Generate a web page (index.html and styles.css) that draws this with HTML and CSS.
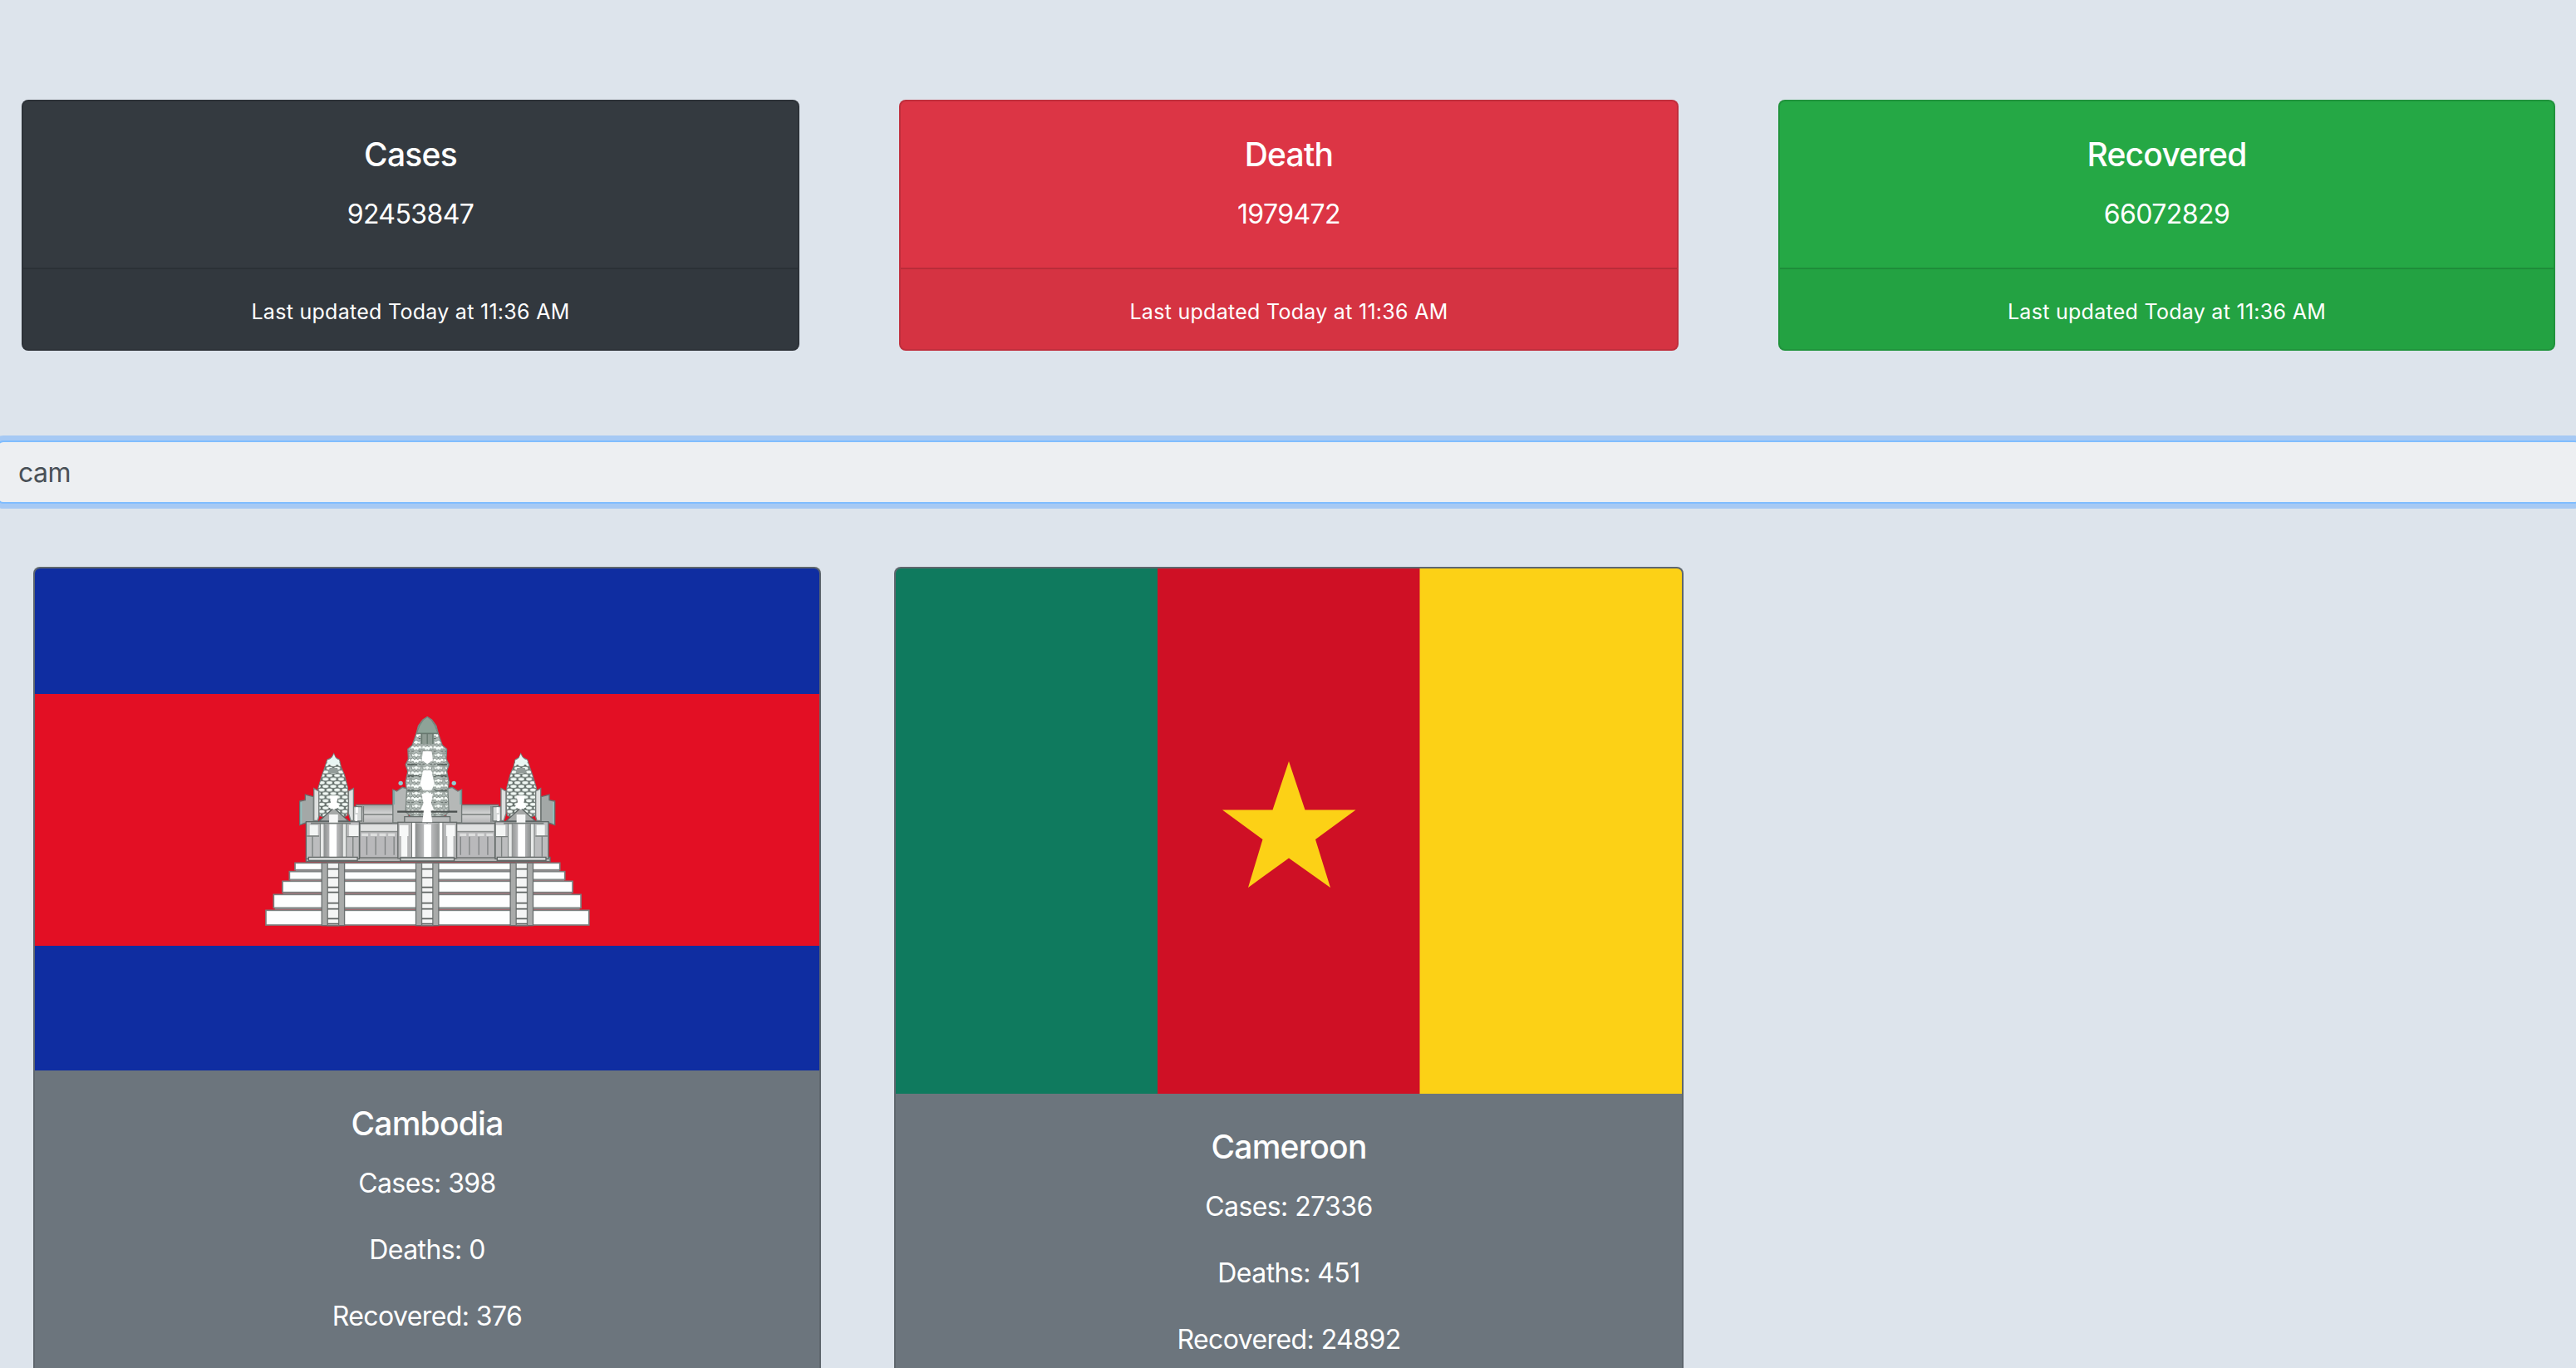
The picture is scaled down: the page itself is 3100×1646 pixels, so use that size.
FILE: index.html
```
<!DOCTYPE html>
<html lang="en">
<head>
<meta charset="utf-8">
<title>Covid tracker</title>
<link rel="stylesheet" href="styles.css">
</head>
<body>
<main class="page">
  <section class="summary">
    <article class="card card-dark">
      <div class="card-body"><h2 class="card-title">Cases</h2><p class="card-text">92453847</p></div>
      <footer class="card-footer"><small>Last updated Today at 11:36 AM</small></footer>
    </article>
    <article class="card card-danger">
      <div class="card-body"><h2 class="card-title">Death</h2><p class="card-text">1979472</p></div>
      <footer class="card-footer"><small>Last updated Today at 11:36 AM</small></footer>
    </article>
    <article class="card card-success">
      <div class="card-body"><h2 class="card-title">Recovered</h2><p class="card-text">66072829</p></div>
      <footer class="card-footer"><small>Last updated Today at 11:36 AM</small></footer>
    </article>
  </section>

  <input class="search" type="text" value="cam" aria-label="Search a country">

  <section class="countries">
    <article class="card card-country">
      <svg class="flag flag-kh" viewBox="0 0 943 604" preserveAspectRatio="none" role="img" aria-label="Flag of Cambodia">
        <defs>
          <pattern id="stones" x="289" y="0" width="28" height="26" patternUnits="userSpaceOnUse">
            <rect width="28" height="26" fill="#66706c"/>
            <g fill="#f1f8f4">
              <ellipse cx="14" cy="6.5" rx="11" ry="5.5"/>
              <ellipse cx="0" cy="19.5" rx="11" ry="5.5"/>
              <ellipse cx="28" cy="19.5" rx="11" ry="5.5"/>
            </g>
          </pattern>
          <pattern id="carving" x="622" y="12" width="40" height="46" patternUnits="userSpaceOnUse">
            <rect width="40" height="46" fill="#b4bdb9"/>
            <path d="M2 2l9 5 9-6 9 6 9-5-4 15-9-4-5 8-5-8-9 4zM0 24l8-4 6 6 6-5 6 5 6-6 8 4v12l-9-4-5 9-6-6-6 6-5-9-9 4z" fill="#f8fdfa" stroke="#5a635f" stroke-width="2"/>
            <path d="M2 42h9M29 42h9" stroke="#58605d" stroke-width="3"/>
          </pattern>
          <linearGradient id="roof" x2="0" y2="1"><stop offset="0" stop-color="#a3a6a6"/><stop offset=".5" stop-color="#d5d6d6"/><stop offset="1" stop-color="#b5b5b6"/></linearGradient>
          <linearGradient id="wall"><stop offset="0" stop-color="#8e9191"/><stop offset=".5" stop-color="#cfcfd1"/><stop offset="1" stop-color="#969898"/></linearGradient>
          <g id="stairs">
            <rect x="-41" y="595" width="82" height="226" fill="#a9abaa" stroke="#6b7070" stroke-width="4"/>
            <rect x="-20" y="595" width="40" height="226" fill="#f4f5f5" stroke="#737877" stroke-width="4"/>
            <path d="M-20 617h40M-20 648h40M-20 683h40M-20 701h40M-20 740h40M-20 761h40M-20 796h40M-20 815h40" stroke="#5d6261" stroke-width="5"/>
          </g>
          <g id="wing">
            <!-- gallery -->
            <rect x="385" y="385" width="150" height="66" fill="url(#roof)" stroke="#707675" stroke-width="4"/>
            <path d="M410 420h120M412 390v58" stroke="#777c7b" stroke-width="4"/>
            <rect x="398" y="452" width="140" height="124" fill="#b9b9bb" stroke="#666b6a" stroke-width="4"/>
            <rect x="402" y="457" width="132" height="22" fill="#e0e1e1"/>
            <path d="M402 482h132" stroke="#8a8e8d" stroke-width="4"/>
            <path d="M405 488h24v10h-24zM437 488h24v10h-24zM469 488h24v10h-24zM501 488h24v10h-24z" fill="#dedfdf"/>
            <path d="M424 500v66M456 500v66M490 500v66M522 500v66" stroke="#7f8283" stroke-width="4"/>
            <!-- outer pavilion -->
            <path d="M182 372l20-4v-20l30 8v94h-28l-22 8z" fill="#a3a8a7" stroke="#66706e" stroke-width="4"/>
            <path d="M187 376v78" stroke="#8fc0bd" stroke-width="5"/>
            <rect x="205" y="446" width="192" height="134" fill="#bcbdbe" stroke="#5f6665" stroke-width="4"/>
            <rect x="218" y="458" width="30" height="38" fill="#f3f5f4"/>
            <rect x="360" y="458" width="34" height="40" fill="#f3f5f4"/>
            <path d="M208 498h44M352 500h42M228 500v72M374 502v70" stroke="#7b807f" stroke-width="4"/>
            <rect x="256" y="452" width="14" height="122" fill="#e7e9e8" stroke="#777c7b" stroke-width="3"/>
            <rect x="336" y="452" width="14" height="122" fill="#e7e9e8" stroke="#777c7b" stroke-width="3"/>
            <rect x="270" y="456" width="66" height="118" fill="url(#wall)"/>
            <rect x="289" y="430" width="26" height="144" fill="#fff"/>
            <path d="M376 392h30v52h-30z" fill="#d5d8d7" stroke="#6f7574" stroke-width="4"/>
            <path d="M388 394v20M386 420v24" stroke="#fff" stroke-width="8"/>
            <!-- outer tower -->
            <path d="M305 200l6 14 14 8 6 26 12 28 12 46 4 58-6 44-48 18-52-18-8-44 4-58 14-46 10-28 8-26 16-8z" fill="url(#stones)" stroke="#77807d" stroke-width="3"/>
            <path d="M305 202l6 14 12 8 4 16h-48l4-16 16-8z" fill="#e9f6f3"/>
            <path d="M290 252h28l4 18h-38z" fill="#939c99"/>
            <path d="M233 326l18 10v92l-4 14h-14zM376 326l-18 10v80l8 26h10z" fill="#dfe1e0" stroke="#777d7b" stroke-width="4"/>
            <path d="M252 444l24-22 29-26 29 26 24 22z" fill="#a6a9a8" stroke="#5f6665" stroke-width="4"/>
            <path d="M290 352h30l-4 24 10 18-21 8-21-8 10-18z" fill="#fff"/>
            <path d="M288 420h32v34h-32z" fill="#f6f7f7"/>
            <path d="M222 452h144" stroke="#767b7a" stroke-width="5"/>
            <path d="M214 574h176v12H214z" fill="#d2d4d3" stroke="#5f6564" stroke-width="4"/>
            <!-- central pavilion -->
            <path d="M518 330l14 6 20-14 22 6v122h-56z" fill="#b5b8b7" stroke="#737a78" stroke-width="4"/>
            <path d="M522 334v50" stroke="#79aba8" stroke-width="6"/>
            <circle cx="546" cy="307" r="8" fill="#8fd0d2"/>
            <rect x="536" y="448" width="106" height="130" fill="#b4b5b6" stroke="#666b6a" stroke-width="4"/>
            <rect x="542" y="458" width="32" height="40" fill="#f7f8f8"/>
            <rect x="548" y="498" width="22" height="74" fill="#f7f8f8"/>
            <rect x="586" y="446" width="14" height="130" fill="#fff" stroke="#777c7b" stroke-width="3"/>
          </g>
        </defs>
        <rect width="943" height="604" fill="#0f2da1"/>
        <rect y="151" width="943" height="303" fill="#e30f24"/>
        <g transform="translate(257.7 156) scale(.33333)">
          <g fill="#fdfefe" stroke="#7b8180" stroke-width="5">
            <rect x="165" y="595" width="955" height="25"/>
            <rect x="145" y="626" width="993" height="29"/>
            <rect x="120" y="661" width="1046" height="40"/>
            <rect x="88" y="709" width="1108" height="48"/>
            <rect x="60" y="766" width="1165" height="53"/>
          </g>
          <path d="M168 622h950M148 657h988M122 705h1040M92 761h1100" stroke="#8d8b8c" stroke-width="5"/>
          <path d="M205 574h880v16H205z" fill="#b3b4b4" stroke="#646a69" stroke-width="4"/>
          <use href="#wing"/>
          <use href="#wing" transform="translate(1284 0) scale(-1 1)"/>
          <rect x="602" y="452" width="80" height="124" fill="url(#wall)"/>
          <path d="M642 68l16 10 16 22 8 30 14 40 16 14-2 36 10 20-8 24 8 40-4 26 4 80-24 20h-108l-24-20 4-80-4-26 8-40-8-24 10-20-2-36 16-14 14-40 8-30 16-22z" fill="url(#carving)" stroke="#7b8581" stroke-width="4"/>
          <path d="M642 68l14 10 14 22 10 26h-76l10-26 14-22z" fill="#8ea398" stroke="#70877b" stroke-width="3"/>
          <path d="M618 128h48v38h-48z" fill="#8f9c94"/>
          <path d="M622 130v36M662 130v36M642 130v36M604 128h76" stroke="#68786f" stroke-width="4"/>
          <path d="M570 240h36M678 240h36M572 280h40M672 280h40M570 335h44M670 335h44" stroke="#525b57" stroke-width="4"/>
          <path d="M626 192h32l4 32-20 14-20-14zM628 260h28l12 48-10 24h-32l-10-24zM622 345h40l-6 34 10 26h-48l10-26z" fill="#fff"/>
          <path d="M534 410h216" stroke="#4a4f4e" stroke-width="7"/>
          <path d="M560 428h164v20H560z" fill="#b9bbbb" stroke="#676d6c" stroke-width="4"/>
          <path d="M630 400h24l6 48h-36z" fill="#fff"/>
          <rect x="630" y="456" width="26" height="118" fill="#fff"/>
          <path d="M545 576h194v12H545z" fill="#cfd1d0" stroke="#5f6564" stroke-width="4"/>
          <use href="#stairs" x="302.500"/>
          <use href="#stairs" x="642"/>
          <use href="#stairs" x="982.500"/>
        </g>
      </svg>
      <div class="card-body">
        <h2 class="card-title">Cambodia</h2>
        <p class="card-text">Cases: 398</p>
        <p class="card-text">Deaths: 0</p>
        <p class="card-text">Recovered: 376</p>
      </div>
    </article>
    <article class="card card-country">
      <svg class="flag flag-cm" viewBox="0 0 946 632" preserveAspectRatio="none" role="img" aria-label="Flag of Cameroon">
        <rect width="316" height="632" fill="#0f7a5e"/>
        <rect x="315" width="316" height="632" fill="#cf1025"/>
        <rect x="630.500" width="316" height="632" fill="#fcd116"/>
        <path d="M473 232l19.500 58.500h61l-48.500 35.500 18 58-50-35.500-49 35.500 17.500-58-48.500-35.500h60.500z" fill="#fcd116"/>
      </svg>
      <div class="card-body">
        <h2 class="card-title">Cameroon</h2>
        <p class="card-text">Cases: 27336</p>
        <p class="card-text">Deaths: 451</p>
        <p class="card-text">Recovered: 24892</p>
      </div>
    </article>
  </section>
</main>
</body>
</html>
```
FILE: styles.css
```
* { box-sizing: border-box; }

body {
  margin: 0;
  background: #dde4ec;
  font: 400 32px/48px Inter, "Liberation Sans", sans-serif;
  letter-spacing: -.58px;
  color: #fff;
}

.page {
  height: 1646px;
  overflow: hidden;
  padding-top: 120px;
}

.summary {
  display: grid;
  grid-template-columns: 936px 938px 935px;
  column-gap: 120px;
  padding-left: 26px;
}

.card {
  display: flex;
  flex-direction: column;
  overflow: hidden;
  border: 2px solid rgba(0, 0, 0, .125);
  border-radius: 8px;
  text-align: center;
}

.card-dark { background: #343a40; }
.card-danger { background: #dc3545; }
.card-success { background: #25a845; }
.card-country { background: #6c757d; }

.card-body { padding: 40px; }

.card-title {
  margin: 0 0 24px;
  font-size: 39px;
  font-weight: 500;
  line-height: 48px;
  letter-spacing: -.75px;
}

.card-text { margin: 0 0 32px; }
.card-text:last-child { margin-bottom: 0; }

.card-footer {
  padding: 25px 40px 21px;
  border-top: 2px solid rgba(0, 0, 0, .125);
  background: rgba(0, 0, 0, .03);
}

.summary .card { height: 302px; }

.card-footer small {
  font-size: 25px;
  letter-spacing: .28px;
}

.search {
  display: block;
  width: 3110px;
  height: 76px;
  margin: 108px 0 76px -4px;
  padding: 12px 24px;
  border: 2px solid #80bdff;
  border-radius: 8px;
  outline: 0;
  background: #edeff2;
  box-shadow: 0 0 0 6px rgba(90, 165, 255, .42);
  color: #495057;
  font: inherit;
  letter-spacing: inherit;
}

.countries {
  display: grid;
  grid-template-columns: 948px 950px;
  column-gap: 88px;
  align-items: start;
  padding-left: 40px;
}

.card-country { padding-bottom: 80px; }

.flag { display: block; width: 100%; }
.flag-kh { height: 604px; }
.flag-cm { height: 632px; }
```
